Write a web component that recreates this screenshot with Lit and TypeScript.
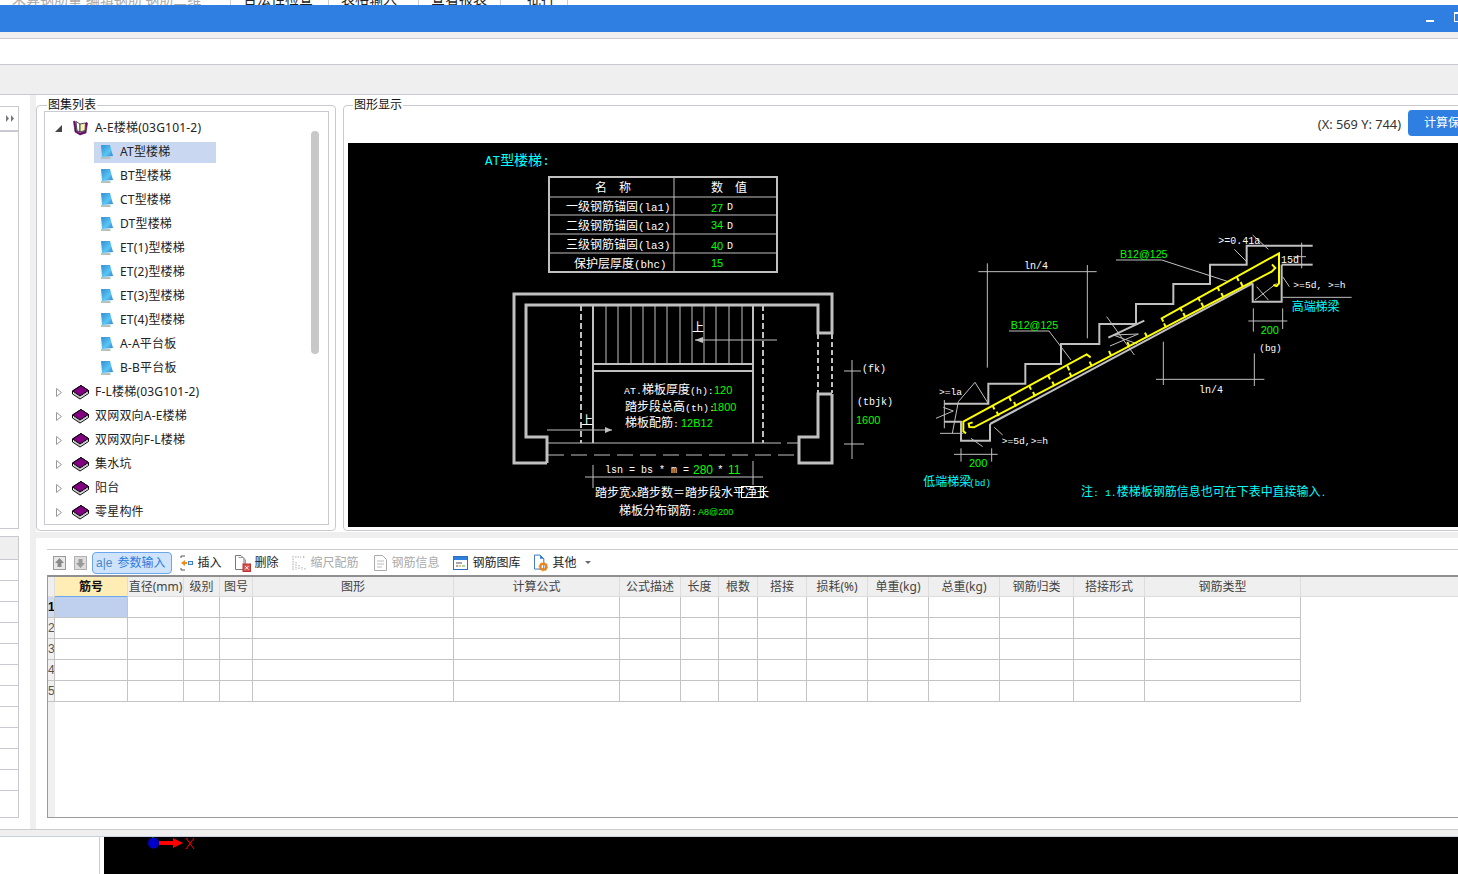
import { LitElement, css, html, svg, unsafeCSS } from "lit";
import { customElement } from "lit/decorators.js";

const GREY = "#c0c0c0";
const GREEN = "#00ff00";
const CYAN = "#00ffff";
const WHITE = "#ffffff";
const YELLOW = "#ffff00";

type Pt = number[];

const line = (pts: Pt, color = GREY, w = 1, dash = "") =>
  svg`<polyline points=${pts.join(" ")} fill="none" stroke=${color} stroke-width=${w} stroke-dasharray=${dash}></polyline>`;

// latin runs next to CJK are drawn a bit smaller, like the CAD font
const label = (x: number, y: number, s: string, color = WHITE, size = 12, ratio = 0.83) => {
  const parts = s.split(/([\x00-\x7f]+)/).filter(Boolean);
  const mixed = parts.length > 1;
  return svg`<text x=${x} y=${y} fill=${color} font-size=${size} class=${color === GREEN ? "num" : ""} xml:space="preserve">${
    mixed
      ? parts.map((p) => svg`<tspan font-size=${/^[\x00-\x7f]/.test(p) ? size * ratio : size}>${p}</tspan>`)
      : s
  }</text>`;
};

// spec table, page coordinates: name, value, unit, x, name y, value y, unit y
const tableRows = [
  ["一级钢筋锚固(la1)", "27", "D", 566, 211, 212, 210],
  ["二级钢筋锚固(la2)", "34", "D", 566, 230, 229, 229],
  ["三级钢筋锚固(la3)", "40", "D", 566, 249, 250, 249],
  ["保护层厚度(bhc)", "15", "", 574, 268, 267, 267],
] as const;

const treads = [606, 618, 631, 643, 655, 667, 680, 692, 704, 716, 729, 742];

// section drawing, in 3x coordinates from origin 900,220
const sectionLines: Pt[] = [
  [133, 551, 265, 551, 265, 491, 376, 491, 376, 432, 483, 432, 483, 372, 598, 372, 598, 312, 708, 312, 708, 252, 820, 252, 820, 192, 930, 192, 930, 134, 1040, 134, 1040, 77, 1238, 77],
  [1145, 134, 1238, 134],
  [1145, 134, 1145, 245, 1058, 245, 1058, 190],
  [133, 605, 183, 605, 183, 662, 270, 662, 270, 612],
  [270, 612, 1058, 190],
  [625, 353, 733, 302],
];

const sectionThin: Pt[] = [
  [235, 155, 590, 155], [262, 130, 262, 443], [562, 135, 562, 355],
  [768, 478, 1093, 478], [790, 365, 790, 495], [1063, 400, 1063, 498],
  [327, 333, 447, 333, 513, 420], [648, 120, 785, 120, 985, 185],
  [1003, 88, 1040, 125], [1058, 45, 1105, 88], [1205, 68, 1205, 145], [1180, 110, 1218, 110],
  [1148, 170, 1168, 200], [1065, 240, 1130, 190], [1070, 200, 1105, 240], [1148, 232, 1355, 232],
  [1045, 303, 1162, 303], [1060, 265, 1060, 335], [1148, 265, 1148, 327],
  [175, 545, 225, 487, 265, 551], [175, 545, 157, 640], [133, 540, 133, 625],
  [108, 595, 160, 573, 130, 562], [120, 640, 190, 640],
  [283, 622, 308, 645], [213, 655, 248, 680],
  [162, 703, 293, 703], [183, 685, 183, 725], [275, 685, 275, 725],
  [620, 290, 703, 405], [630, 378, 715, 342, 640, 345, 712, 372],
];

const rebar: Pt[] = [
  [198, 640, 190, 634, 190, 605, 560, 403, 572, 412],
  [218, 607, 206, 611, 208, 621, 222, 622, 1115, 155, 1126, 144, 1116, 133],
  [790, 305, 785, 295, 1137, 100, 1137, 190, 1130, 198, 1120, 195],
];

const rebarTicks: Pt[] = [
  [280, 562], [330, 537], [390, 503], [447, 472], [505, 445], [293, 582], [345, 553], [402, 523],
  [460, 492], [512, 465], [572, 432], [630, 400], [685, 373], [738, 345], [795, 317], [853, 286],
  [907, 255], [967, 226], [1025, 193], [843, 268], [897, 238], [955, 207], [1013, 177],
];

@customElement("cad-drawing")
export class CadDrawing extends LitElement {
  static styles = css`
    :host { display: block; background: #000; height: 384px; overflow: hidden; }
    svg { display: block; }
    text { font-family: "Liberation Mono", "Noto Sans CJK SC", monospace; }
    text.num { font-family: "Liberation Sans", sans-serif; }
  `;

  specTable() {
    return svg`
      <rect x="549" y="177" width="228" height="95" fill="none" stroke=${GREY} stroke-width="2"></rect>
      ${line([674, 177, 674, 272])}
      ${[197, 215, 234, 253].map((y) => line([549, y, 777, y]))}
      ${label(595, 192, "名  称")}
      ${label(711, 192, "数  值")}
      ${tableRows.map(([name, val, unit, x, yName, yVal, yUnit]) => svg`
        ${label(x, yName, name, WHITE, 12, 0.9)}
        ${label(711, yVal, val, GREEN, 11)}
        ${label(727, yUnit, unit, WHITE, 10)}
      `)}`;
  }

  plan() {
    const wall = (p: Pt) => line(p, GREY, 3);
    return svg`
      ${wall([547, 463, 514, 463, 514, 294, 832, 294, 832, 333, 818, 333, 818, 305, 526, 305, 526, 437, 547, 437, 547, 463])}
      ${wall([832, 394, 818, 394, 818, 437, 799, 437, 799, 463, 832, 463, 832, 394])}
      ${line([818, 334, 818, 393], GREY, 2, "5 3")}
      ${line([832, 334, 832, 393], GREY, 2, "5 3")}
      ${line([593, 305, 593, 443], GREY, 2)}
      ${line([753, 305, 753, 443], GREY, 2)}
      ${treads.map((x) => line([x, 305, x, 363]))}
      ${line([593, 364, 753, 364], GREY, 2)}
      ${line([593, 371, 753, 371], GREY, 2)}
      ${line([581, 305, 581, 443], GREY, 2, "6 3")}
      ${line([763, 305, 763, 443], GREY, 2, "6 3")}
      ${line([547, 443, 781, 443])}
      ${line([787, 443, 798, 443])}
      ${line([548, 455, 799, 455], GREY, 1, "16 7")}
      ${line([695, 340, 777, 340])}
      <polygon points="695,340 703,337 703,343" fill=${GREY}></polygon>
      ${label(692, 332, "上")}
      ${line([547, 430, 612, 430])}
      <polygon points="612,430 605,427 605,433" fill=${GREY}></polygon>
      ${label(581, 425, "上")}
      ${label(624, 394, "AT.梯板厚度(h):")}
      ${label(714, 394, "120", GREEN, 11)}
      ${label(625, 411, "踏步段总高(th):")}
      ${label(712, 411, "1800", GREEN, 11)}
      ${label(625, 427, "梯板配筋:")}
      ${label(681, 427, "12B12", GREEN, 11)}
      ${line([852, 360, 852, 459])}
      ${line([844, 371, 861, 371])}
      ${line([844, 444, 864, 444])}
      ${label(862, 372, "(fk)", WHITE, 10)}
      ${label(857, 405, "(tbjk)", WHITE, 10)}
      ${label(856, 424, "1600", GREEN, 11)}
      ${label(605, 473, "lsn = bs * m =", WHITE, 10)}
      ${label(693, 474, "280", GREEN, 12)}
      ${label(717, 473, "*", WHITE, 11)}
      ${label(728, 474, "11", GREEN, 12)}
      ${line([585, 477, 763, 477])}
      ${line([593, 465, 593, 488])}
      ${line([753, 461, 753, 485])}
      ${label(595, 497, "踏步宽X踏步数＝踏步段水平净长")}
      <rect x="741.5" y="486.5" width="22" height="11" fill="none" stroke=${WHITE}></rect>
      ${label(619, 515, "梯板分布钢筋:")}
      ${label(698, 515, "A8@200", GREEN, 9)}`;
  }

  section() {
    return svg`
      <g transform="translate(900 220) scale(0.33333)">
        ${sectionThin.map((p) => line(p, GREY, 3))}
        ${sectionLines.map((p) => line(p, GREY, 6))}
        ${rebar.map((p) => line(p, YELLOW, 6))}
        ${rebarTicks.map(([x, y]) => line([x - 3, y - 7, x + 3, y + 6], YELLOW, 6))}
        ${label(372, 147, "ln/4", WHITE, 30)}
        ${label(897, 518, "ln/4", WHITE, 30)}
        ${label(332, 327, "B12@125", GREEN, 32)}
        ${label(660, 113, "B12@125", GREEN, 32)}
        ${label(955, 72, ">=0.41a", WHITE, 30)}
        ${label(1143, 130, "15d", WHITE, 30)}
        ${label(1180, 205, ">=5d, >=h", WHITE, 29)}
        ${label(1175, 272, "高端梯梁", CYAN, 36)}
        ${label(1082, 341, "200", GREEN, 33)}
        ${label(1078, 393, "(bg)", WHITE, 28)}
        ${label(117, 526, ">=la", WHITE, 29)}
        ${label(305, 672, ">=5d,>=h", WHITE, 29)}
        ${label(207, 740, "200", GREEN, 33)}
        ${label(70, 798, "低端梯梁", CYAN, 36)}
        ${label(208, 797, "(bd)", CYAN, 27)}
        ${label(543, 828, "注: 1.楼梯板钢筋信息也可在下表中直接输入.", CYAN, 36)}
      </g>`;
  }

  render() {
    return html`<svg width="1110" height="384" viewBox="348 143 1110 384">
      ${label(485, 165, "AT型楼梯:", CYAN, 14, 0.9)}
      ${this.specTable()}
      ${this.plan()}
      ${this.section()}
    </svg>`;
  }
}

const bookClosed = html`<svg class="ico" width="17" height="16" viewBox="0 0 17 16">
  <polygon points="0.5,7 9,1.5 16.5,6.5 16.5,9.5 8,15 0.5,10" fill="#fff" stroke="#000"></polygon>
  <polygon points="0.5,7 9,1.5 16.5,6.5 8,12" fill="#800080" stroke="#000"></polygon>
  <path d="M2 9 8 13 15.5 8.5M2 10.5 8 14" fill="none" stroke="#777" stroke-width=".6"></path>
</svg>`;

const bookOpen = html`<svg class="ico" width="17" height="16" viewBox="0 0 17 16">
  <path d="M1.5 1.5 3 12 8 15 14 13 15.5 3 14 2.5 13.5 11 8 13 4.5 11 3 1Z" fill="#800080" stroke="#40103f" stroke-width=".6"></path>
  <path d="M4 1.5 8 4 8 12 5 10.5Z" fill="#fff" stroke="#222" stroke-width=".8"></path>
  <path d="M8 4 13.5 3 13 10.5 8 12Z" fill="#f7f2b8" stroke="#222" stroke-width=".8"></path>
</svg>`;

const notebook = html`<svg class="ico" width="15" height="16" viewBox="0 0 15 16">
  <defs>
    <linearGradient id="nb" x1="0" y1="0" x2="1" y2="1">
      <stop offset="0" stop-color="#2f8ed8"></stop>
      <stop offset=".6" stop-color="#5cc4f0"></stop>
      <stop offset="1" stop-color="#2f7fd0"></stop>
    </linearGradient>
  </defs>
  <polygon points="1,2 2,15 12,15 11,13 2,13" fill="#b5c2be"></polygon>
  <polygon points="2,1 11,1 14,12 3,13" fill="url(#nb)"></polygon>
  <path d="M2 1.5H11" stroke="#7b8f9c" stroke-dasharray="1 1"></path>
</svg>`;

const arrowUp = html`<svg width="13" height="14" viewBox="0 0 13 14">
  <rect x=".5" y=".5" width="12" height="13" fill="#e8e8e8" stroke="#9a9a9a"></rect>
  <path d="M6.5 2 11 7H8.5V11H4.5V7H2Z" fill="#8a8a8a"></path>
</svg>`;

const arrowDown = html`<svg width="13" height="14" viewBox="0 0 13 14">
  <rect x=".5" y=".5" width="12" height="13" fill="#dcdcdc" stroke="#b0b0b0"></rect>
  <path d="M6.5 12 11 7H8.5V3H4.5V7H2Z" fill="#9a9a9a"></path>
</svg>`;

const insertIcon = html`<svg width="13" height="16" viewBox="0 0 13 16">
  <path d="M1 1H5M1 15H5M1 1V3M1 13V15" stroke="#555" fill="none"></path>
  <path d="M1 8 5 5V7H7V9H5V11Z" fill="#f08a1d"></path>
  <rect x="8.5" y="6.5" width="4" height="3" fill="#dce9f8" stroke="#3d7fd0"></rect>
</svg>`;

const deleteIcon = html`<svg width="16" height="18" viewBox="0 0 16 18">
  <path d="M.5 1.5H6L9 4.5V15.5H.5Z" fill="#fff" stroke="#777"></path>
  <path d="M3.5 3.5H8L10.5 6V10" fill="none" stroke="#999"></path>
  <rect x="8" y="10" width="7.5" height="7.5" fill="#d9534f" stroke="#b33"></rect>
  <path d="M10 12 13.5 15.5M13.5 12 10 15.5" stroke="#fff"></path>
</svg>`;

const scaleIcon = html`<svg width="14" height="16" viewBox="0 0 14 16">
  <path d="M1 1V15M4 7V15M7 10V15M10 12V15M13 13V15M3 2H9" stroke="#aaa" fill="none" stroke-dasharray="1.5 1"></path>
  <path d="M11 1 13 2 11 3Z" fill="#aaa"></path>
</svg>`;

const docIcon = html`<svg width="13" height="16" viewBox="0 0 13 16">
  <path d="M.5 .5H8.5L12.5 4.5V15.5H.5Z" fill="#fff" stroke="#aaa"></path>
  <path d="M3 6H10M3 9H10M3 12H8" stroke="#bbb"></path>
</svg>`;

const libraryIcon = html`<svg width="15" height="14" viewBox="0 0 15 14">
  <rect x=".5" y=".5" width="14" height="13" fill="#fff" stroke="#2d6fb8"></rect>
  <rect x="1" y="1" width="13" height="3" fill="#2d7fe0"></rect>
  <path d="M3 7H9M3 10H5" stroke="#555"></path>
  <path d="M5.5 10H8" stroke="#e58a1f"></path>
  <path d="M9 10H12" stroke="#4aa84a"></path>
</svg>`;

const otherIcon = html`<svg width="14" height="18" viewBox="0 0 15 18">
  <path d="M.5 .5H6.5L10.5 4.5V15.5H.5Z" fill="#fff" stroke="#2d6fb8"></path>
  <path d="M6.5 .5V4.5H10.5Z" fill="#2d7fe0"></path>
  <circle cx="10" cy="13" r="3.2" fill="none" stroke="#e8841a" stroke-width="2.4"></circle>
  <circle cx="10" cy="13" r="4.6" fill="none" stroke="#e8841a" stroke-dasharray="1.5 2"></circle>
</svg>`;

const treeOpen = ["AT型楼梯", "BT型楼梯", "CT型楼梯", "DT型楼梯", "ET(1)型楼梯", "ET(2)型楼梯", "ET(3)型楼梯", "ET(4)型楼梯", "A-A平台板", "B-B平台板"];
const treeClosed = ["F-L楼梯(03G101-2)", "双网双向A-E楼梯", "双网双向F-L楼梯", "集水坑", "阳台", "零星构件"];

const columns: [string, number][] = [
  ["", 7], ["筋号", 73], ["直径(mm)", 56], ["级别", 36], ["图号", 33], ["图形", 201], ["计算公式", 166],
  ["公式描述", 61], ["长度", 38], ["根数", 39], ["搭接", 49], ["损耗(%)", 61], ["单重(kg)", 61],
  ["总重(kg)", 71], ["钢筋归类", 74], ["搭接形式", 71], ["钢筋类型", 156],
];
const gridColumns = unsafeCSS(columns.map(([, w]) => w + "px").join(" "));

@customElement("app-root")
export class AppRoot extends LitElement {
  static styles = css`
    :host {
      display: block;
      width: 1458px;
      height: 874px;
      overflow: hidden;
      background: #fff;
      color: #222;
      font: 12px/16px "Noto Sans", "Noto Sans CJK SC", sans-serif;
    }
    .strip { height: 5px; overflow: hidden; display: flex; font-size: 14px; }
    .strip span { margin-top: -9px; height: 15px; padding: 0 12px; border-right: 1px solid #ccc; white-space: nowrap; }
    .strip .dim { color: #aaa; }
    .title { height: 27px; box-sizing: border-box; background: #2e7fe1; display: flex; justify-content: flex-end; align-items: flex-end; gap: 20px; padding: 0 0 10px; }
    .min { width: 8px; height: 2px; background: #fff; }
    .max { width: 7px; height: 7px; border: 1px solid #fff; border-top-width: 2px; margin-right: -5px; }
    .band-a { height: 6px; background: #efefef; border-bottom: 1px solid #c9c9d2; }
    .band-b { height: 25px; border-bottom: 1px solid #c9c9d2; }
    .band-c { height: 29px; background: #efefef; border-bottom: 1px solid #c9c9d2; }

    .work { display: grid; grid-template-columns: 30px 6px 1fr; height: 734px; }
    .left { overflow: hidden; }
    .gutter { background: #efefef; }
    .side-top { width: 18px; height: 421px; margin-top: 11px; border: solid #c9c9d2; border-width: 1px 1px 1px 0; }
    .side-head { height: 23px; border-bottom: 2px solid #c9c9d2; display: flex; align-items: center; justify-content: flex-end; padding-right: 4px; }
    .side-list { width: 18px; height: 280px; margin-top: 7px; border: solid #c9c9d2; border-width: 1px 1px 1px 0; overflow: hidden; }
    .side-list .head { height: 22px; background: #efefef; }
    .side-list .row { height: 20px; border-top: 1px solid #c9c9d2; }

    .right { min-width: 0; display: flex; flex-direction: column; }
    .upper { display: flex; height: 437px; gap: 7px; }
    fieldset {
      margin: 3px 0 0;
      min-width: 0;
      height: 433px;
      box-sizing: border-box;
      border: 1px solid #c9c9d2;
      border-radius: 4px;
      display: flex;
      flex-direction: column;
    }
    legend { padding: 0 1px; line-height: 14px; color: #111; }
    .atlas { width: 300px; flex: none; padding: 0 6px 5px 7px; }
    .atlas legend { margin-left: 3px; }
    .tree { flex: 1; margin-top: -1px; border: 1px solid #c9c9d2; position: relative; overflow: hidden; padding-top: 4px; letter-spacing: .2px; }
    .scroll { position: absolute; left: 266px; top: 19px; width: 8px; height: 223px; border-radius: 4px; background: #c8c8c8; }
    .node { height: 24px; display: flex; align-items: center; white-space: nowrap; }
    .twist { width: 27px; flex: none; display: flex; justify-content: flex-end; padding-right: 10px; box-sizing: border-box; }
    .node .ico { flex: none; margin-right: 6px; }
    .leaf { padding-left: 49px; }
    .leaf .inner { display: flex; align-items: center; width: 117px; height: 21px; padding-left: 5px; }
    .leaf .inner.sel { background: #c9d8f0; }

    .graph { flex: 1; padding: 0 0 3px 4px; margin-right: -4px; }
    .graph legend { margin-left: 5px; }
    .info { height: 31px; display: flex; justify-content: flex-end; gap: 7px; flex: none; }
    .coords { line-height: 26px; margin-top: -1px; color: #333; font-size: 12.8px; }
    .save {
      width: 66px;
      height: 26px;
      margin-top: -2px;
      margin-right: -29px;
      padding-left: 16px;
      background: #2e7fe1;
      color: #fff;
      border-radius: 4px 0 0 4px;
      line-height: 26px;
      white-space: nowrap;
      overflow: hidden;
      flex: none;
    }

    .band-d { height: 6px; background: #efefef; flex: none; }
    .lower { flex: 1; padding: 11px 0 0 11px; min-height: 0; display: flex; flex-direction: column; }
    .tools { height: 25px; flex: none; border-top: 1px solid #ccc; display: flex; align-items: center; gap: 13px; padding-left: 6px; }
    .tool { display: flex; align-items: center; gap: 5px; white-space: nowrap; }
    .tool.off { color: #aaa; }
    .tool.tight { gap: 4px; }
    .tool.info-tool { margin-left: 2px; }
    .arrows { display: flex; gap: 8px; margin-right: -8px; }
    .active {
      margin-right: -5.5px;
      height: 20px;
      width: 75px;
      padding-left: 3px;
      gap: 5px;
      color: #2a7de1;
      background: #cfe3fb;
      border: 1px solid #6aa7ee;
      border-radius: 4px;
    }
    .aie { font: 12px "Liberation Sans", sans-serif; color: #4a86c8; }
    .caret { width: 0; height: 0; border: 3px solid transparent; border-top: 3px solid #666; margin: 3px 0 0 3px; }

    .sheet { height: 240px; flex: none; border-left: 1px solid #9a9aa0; border-bottom: 1px solid #9a9aa0; border-top: 2px solid #8f8f8f; position: relative; overflow: hidden; }
    .rail { position: absolute; left: 0; top: 0; bottom: 0; width: 7px; background: #f0f0f0; }
    .hrow { display: grid; grid-template-columns: ${gridColumns}; height: 19px; background: #efefef; border-bottom: 1px solid #ddd; position: relative; }
    .drow { display: grid; grid-template-columns: ${gridColumns}; height: 21px; position: relative; width: 1253px; }
    .hrow > div { text-align: center; line-height: 19px; border-right: 1px solid #ddd; color: #444; white-space: nowrap; overflow: hidden; }
    .hrow > .cur { background: #ffedb5; color: #111; font-weight: 700; border-bottom: 1px solid #6aa7ee; height: 19px; }
    .drow > div { border-right: 1px solid #c4c4c4; border-bottom: 1px solid #c4c4c4; box-sizing: border-box; }
    .drow > .num { color: #555; font-size: 12px; line-height: 20px; text-align: left; background: #f0f0f0; overflow: hidden; font-family: "Liberation Sans", sans-serif; }
    .drow > .num.cur { color: #000; font-weight: 700; background: #cfdcf0; }
    .drow > .sel { background: #bfd0ee; }

    .foot { height: 6px; background: #efefef; border-top: 1px solid #ccc; border-bottom: 1px solid #c9d0e0; }
    .bottom { height: 37px; display: flex; }
    .bottom .blank { width: 99px; border-right: 1px solid #c9c9d2; flex: none; }
    .bottom .view { flex: 1; margin-left: 4px; background: #000; }
    .axis { display: block; }
  `;

  renderTree() {
    return html`
      <div class="tree">
        <div class="node">
          <span class="twist"><svg width="7" height="7" viewBox="0 0 7 7"><polygon points="7,0 7,7 0,7" fill="#444"></polygon></svg></span>
          ${bookOpen}<span>A-E楼梯(03G101-2)</span>
        </div>
        ${treeOpen.map((t, i) => html`
          <div class="node leaf"><div class="inner ${i === 0 ? "sel" : ""}">${notebook}<span>${t}</span></div></div>`)}
        ${treeClosed.map((t) => html`
          <div class="node">
            <span class="twist"><svg width="6" height="9" viewBox="0 0 6 9"><polygon points=".5,.5 5.5,4.5 .5,8.5" fill="#fff" stroke="#999"></polygon></svg></span>
            ${bookClosed}<span>${t}</span>
          </div>`)}
        <div class="scroll"></div>
      </div>`;
  }

  renderTools() {
    return html`
      <div class="tools">
        <div class="arrows">${arrowUp}${arrowDown}</div>
        <div class="tool active"><span class="aie">a|e</span><span>参数输入</span></div>
        <div class="tool">${insertIcon}<span>插入</span></div>
        <div class="tool tight">${deleteIcon}<span>删除</span></div>
        <div class="tool off">${scaleIcon}<span>缩尺配筋</span></div>
        <div class="tool off info-tool">${docIcon}<span>钢筋信息</span></div>
        <div class="tool">${libraryIcon}<span>钢筋图库</span></div>
        <div class="tool">${otherIcon}<span>其他</span><span class="caret"></span></div>
      </div>`;
  }

  renderSheet() {
    return html`
      <div class="sheet">
        <div class="rail"></div>
        <div class="hrow">
          ${columns.map(([name], i) => html`<div class=${i === 1 ? "cur" : ""}>${name}</div>`)}
        </div>
        ${[1, 2, 3, 4, 5].map((n) => html`
          <div class="drow">
            ${columns.map((_, i) => i === 0
              ? html`<div class="num ${n === 1 ? "cur" : ""}">${n}</div>`
              : html`<div class=${n === 1 && i === 1 ? "sel" : ""}></div>`)}
          </div>`)}
      </div>`;
  }

  render() {
    return html`
      <div class="strip">
        <span class="dim" style="width:206px">未算钢筋量 编辑钢筋 钢筋三维</span>
        <span style="width:73px">合法性检查</span>
        <span style="width:65px">表格输入</span>
        <span style="width:57px">查看报表</span>
        <span style="width:42px">一批打</span>
      </div>
      <div class="title"><div class="min"></div><div class="max"></div></div>
      <div class="band-a"></div>
      <div class="band-b"></div>
      <div class="band-c"></div>
      <div class="work">
        <div class="left">
          <div class="side-top">
            <div class="side-head"><svg width="8" height="7" viewBox="0 0 8 7"><path d="M0 0 3 3.5 0 7ZM5 0 8 3.5 5 7Z" fill="#777"></path></svg></div>
          </div>
          <div class="side-list">
            <div class="head"></div>
            ${Array.from({ length: 12 }, () => html`<div class="row"></div>`)}
          </div>
        </div>
        <div class="gutter"></div>
        <div class="right">
          <div class="upper">
            <fieldset class="atlas"><legend>图集列表</legend>${this.renderTree()}</fieldset>
            <fieldset class="graph">
              <legend>图形显示</legend>
              <div class="info">
                <span class="coords">(X: 569 Y: 744)</span>
                <span class="save">计算保存</span>
              </div>
              <cad-drawing></cad-drawing>
            </fieldset>
          </div>
          <div class="band-d"></div>
          <div class="lower">
            ${this.renderTools()}
            ${this.renderSheet()}
          </div>
        </div>
      </div>
      <div class="foot"></div>
      <div class="bottom">
        <div class="blank"></div>
        <div class="view">
          <svg class="axis" width="100" height="37" viewBox="0 0 100 37">
            <path d="M49 0V2" stroke="#0f0"></path>
            <circle cx="49.5" cy="6" r="5.5" fill="#0000c8"></circle>
            <path d="M55 4H69V1L79 6 69 11V8H55Z" fill="#f00"></path>
            <path d="M82 1 90 12M90 1 82 12" stroke="#f00" fill="none"></path>
          </svg>
        </div>
      </div>
    `;
  }
}
